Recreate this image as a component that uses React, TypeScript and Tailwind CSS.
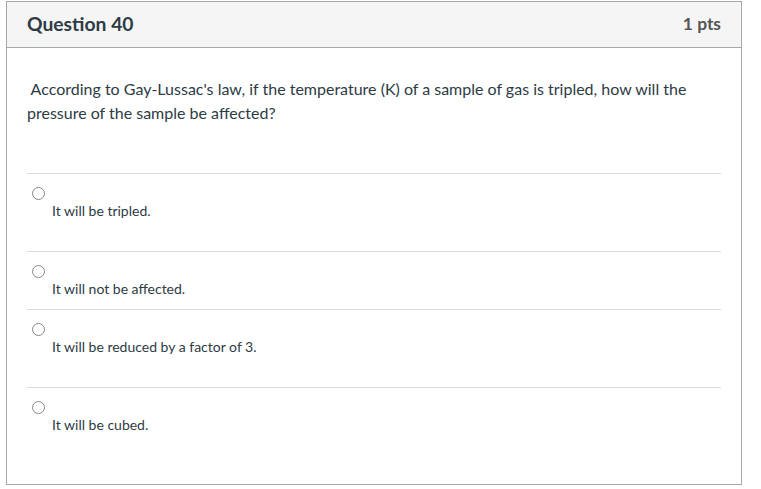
import React from 'react';

const answers = [
  { id: 1, text: 'It will be tripled.', extra: true },
  { id: 2, text: 'It will not be affected.', extra: false },
  { id: 3, text: 'It will be reduced by a factor of 3.', extra: true },
  { id: 4, text: 'It will be cubed.', extra: false },
];

export default function App() {
  return (
    <div className="bg-white min-h-screen pt-px pl-[6px] w-[761px]" style={{ fontFamily: 'Lato, "Open Sans", sans-serif' }}>
      <div className="w-[736px] border border-[#a8a8a8] text-[#2d3b45]">
        <div className="h-[46px] bg-[#f5f5f5] border-b border-[#a8a8a8] flex items-center justify-between px-5">
          <h2 className="text-[19.3px] font-bold">Question 40</h2>
          <span className="text-[17.4px] font-bold text-[#555]">1 pts</span>
        </div>

        <div className="px-5 pt-[29px] pb-[50px]">
          <p className="text-[16px] leading-[24px] mb-[48px]">
            &nbsp;According to Gay-Lussac's law, if the temperature (K) of a sample of gas is tripled, how will the pressure of the sample be affected?
          </p>

          {answers.map(a => (
            <div
              key={a.id}
              className={`border-t border-[#dcdcdc] pt-[13px] ${a.extra ? 'pb-[31px]' : a.id === 4 ? 'pb-0' : 'pb-[11px]'}`}
            >
              <span className="block w-[13px] h-[13px] rounded-full border border-[#888] ml-[5px]"></span>
              <div className="mt-[2px] ml-[25px] text-[14px] leading-[18px]">{a.text}</div>
            </div>
          ))}
        </div>
      </div>
    </div>
  );
}
